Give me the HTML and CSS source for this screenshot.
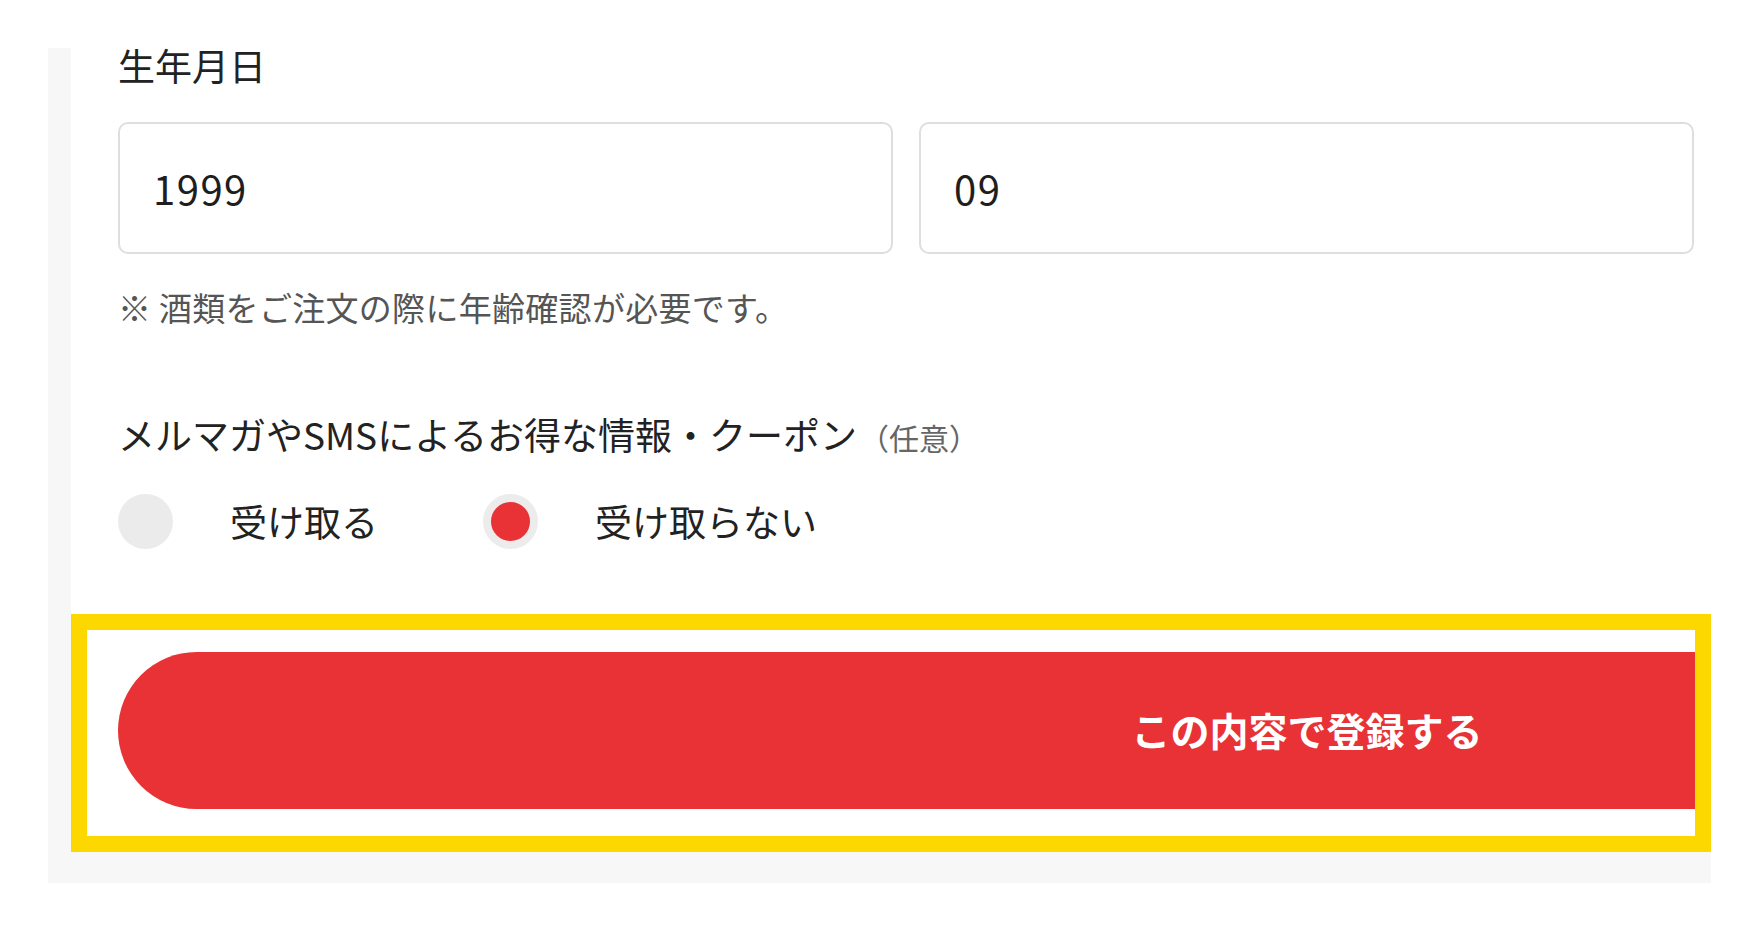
FILE: index.html
```html
<!DOCTYPE html>
<html lang="ja">
<head>
<meta charset="utf-8">
<title>会員登録</title>
<link rel="stylesheet" href="styles.css">
</head>
<body>
<main class="page">
  <section class="panel">
    <div class="card">
      <form class="form">
        <div class="field">
          <p class="label">生年月日</p>
          <div class="date-row">
            <div class="input"><span>1999</span></div>
            <div class="input"><span>09</span></div>
          </div>
          <p class="note">※ 酒類をご注文の際に年齢確認が必要です。</p>
        </div>
        <div class="field optin">
          <p class="label">メルマガやSMSによるお得な情報・クーポン<span class="optional">（任意）</span></p>
          <div class="radios">
            <label class="option">
              <span class="radio"></span>
              <span class="option-text">受け取る</span>
            </label>
            <label class="option option-second">
              <span class="radio radio-checked"></span>
              <span class="option-text">受け取らない</span>
            </label>
          </div>
        </div>
        <div class="submit-area">
          <button type="button" class="submit">この内容で登録する</button>
        </div>
      </form>
    </div>
  </section>
</main>
</body>
</html>
```

FILE: styles.css
```css
* {
  box-sizing: border-box;
}

html, body {
  margin: 0;
  background: #ffffff;
}

body {
  font-family: "Noto Sans CJK JP", "Noto Sans", sans-serif;
  color: #222222;
}

.page {
  padding: 48px 49px 0 48px;
}

.panel {
  background: #f7f7f7;
  padding: 0 0 31px 23px;
}

.card {
  background: #ffffff;
  padding: 0 17px 0 47px;
}

.form {
  margin: 0;
}

.label {
  margin: 0;
  font-size: 37px;
  line-height: 35px;
  color: #222222;
  white-space: nowrap;
}

.optional {
  margin-left: 2px;
  font-size: 30px;
  line-height: 1;
  color: #666666;
}

.date-row {
  display: grid;
  grid-template-columns: 1fr 1fr;
  gap: 26px;
  margin-top: 39px;
}

.input {
  height: 132px;
  border: 2px solid #dedede;
  border-radius: 10px;
  display: flex;
  align-items: center;
  padding-left: 33px;
  font-size: 40px;
  letter-spacing: 1.5px;
  color: #1e1e1e;
}

.note {
  margin: 37px 0 0;
  font-size: 33px;
  line-height: 33px;
  letter-spacing: 0.3px;
  color: #555555;
}

.optin {
  margin-top: 93px;
}

.radios {
  display: flex;
  align-items: center;
  margin-top: 42px;
  height: 55px;
}

.option {
  display: flex;
  align-items: center;
}

.option-second {
  margin-left: 105px;
}

.radio {
  width: 55px;
  height: 55px;
  border-radius: 50%;
  background: #ebebeb;
  flex: none;
}

.radio-checked {
  background: #e83236;
  border: 8px solid #ececec;
}

.option-text {
  margin-left: 57px;
  font-size: 37px;
  line-height: 37px;
  color: #222222;
}

.submit-area {
  margin: 65px -17px 0 -47px;
  border: 16px solid #fcd700;
  padding: 22px 0 27px 31px;
  overflow: hidden;
}

.submit {
  display: flex;
  align-items: center;
  justify-content: center;
  width: 2378px;
  height: 157px;
  border: none;
  border-radius: 79px;
  background: #e83236;
  color: #ffffff;
  font-family: "Noto Sans CJK JP", "Noto Sans", sans-serif;
  font-size: 39px;
  font-weight: 700;
  padding: 0 0 4px;
}
```
